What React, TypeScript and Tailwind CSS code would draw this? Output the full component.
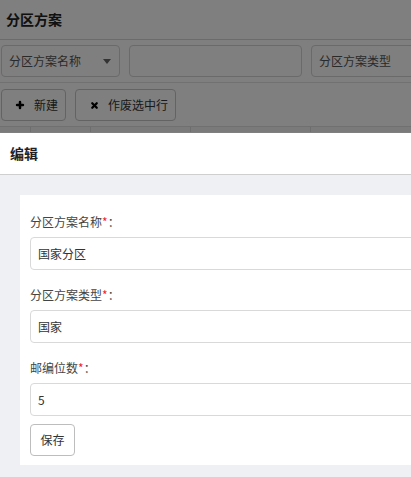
import { Plus, X } from "lucide-react";

const font = { fontFamily: '"Noto Sans CJK SC", "Noto Sans", sans-serif' };

function Field({ label, value }: { label: string; value: string }) {
  return (
    <div className="flex flex-col">
      <div className="h-4 leading-4 text-[12px] text-[#444]">
        {label}
        <span className="text-[#f5222d]">*</span>：
      </div>
      <div className="mt-[7px] flex h-[33px] w-[420px] items-center rounded-[4px] border border-[#d9d9d9] bg-white px-[7px] text-[12px] text-[#333]">
        {value}
      </div>
    </div>
  );
}

export default function App() {
  return (
    <div className="relative h-[477px] w-full overflow-hidden bg-white" style={font}>
      {/* page behind the dialog */}
      <div className="flex h-10 items-center border-b border-[#d6d6d6] px-1.5 text-[14px] font-bold text-[#222]">
        分区方案
      </div>
      <div className="flex gap-[9px] border-b border-[#e3e3e3] pt-[5px] pb-[5px] pl-px">
        <div className="flex h-8 w-[119px] shrink-0 items-center justify-between rounded-[4px] border border-[#d4d4d4] pl-[7px] pr-[8px] text-[12px] text-[#555]">
          <span>分区方案名称</span>
          <span className="h-0 w-0 border-x-[4px] border-t-[5px] border-x-transparent border-t-[#666]" />
        </div>
        <div className="h-8 w-[173px] shrink-0 rounded-[4px] border border-[#d4d4d4]" />
        <div className="flex h-8 w-[140px] shrink-0 items-center rounded-[4px] border border-[#d4d4d4] pl-[7px] text-[12px] text-[#555]">
          分区方案类型
        </div>
      </div>
      <div className="flex gap-[9px] pt-[6px] pl-px">
        <button className="flex h-8 w-[65px] items-center gap-[9px] rounded-[4px] border border-[#c6c6c6] pl-[13px] text-[12px] text-[#333]">
          <Plus size={10} strokeWidth={6} className="text-black" />
          新建
        </button>
        <button className="flex h-8 w-[101px] items-center gap-[9px] rounded-[4px] border border-[#c6c6c6] pl-[14px] text-[12px] text-[#333]">
          <X size={9} strokeWidth={6} className="text-black" />
          作废选中行
        </button>
      </div>
      <div className="mt-[5px] flex h-[6px] border-t border-[#e0e0e0] bg-[#f5f5f5]">
        <div className="w-[31px] border-r border-[#dcdcdc]" />
        <div className="w-[60px] border-r border-[#dcdcdc]" />
        <div className="w-[100px] border-r border-[#dcdcdc]" />
        <div className="w-[120px] border-r border-[#dcdcdc]" />
      </div>

      {/* mask */}
      <div className="absolute inset-0 bg-black/50" />

      {/* dialog */}
      <div className="absolute top-[133px] left-0 w-[460px] bg-white">
        <div className="flex h-[42px] items-center border-b border-[#cfcfcf] px-2.5 text-[14px] font-bold text-[#222]">
          编辑
        </div>
        <div className="h-[400px] bg-[#eff0f4] p-5">
          <div className="flex flex-col bg-white px-2.5 pt-[19px] pb-[9px]">
            <Field label="分区方案名称" value="国家分区" />
            <div className="mt-[17px]">
              <Field label="分区方案类型" value="国家" />
            </div>
            <div className="mt-[17px]">
              <Field label="邮编位数" value="5" />
            </div>
            <button className="mt-2 flex h-8 w-[45px] items-center justify-center rounded-[4px] border border-[#bdbdbd] bg-white text-[12px] text-[#333]">
              保存
            </button>
          </div>
        </div>
      </div>
    </div>
  );
}
